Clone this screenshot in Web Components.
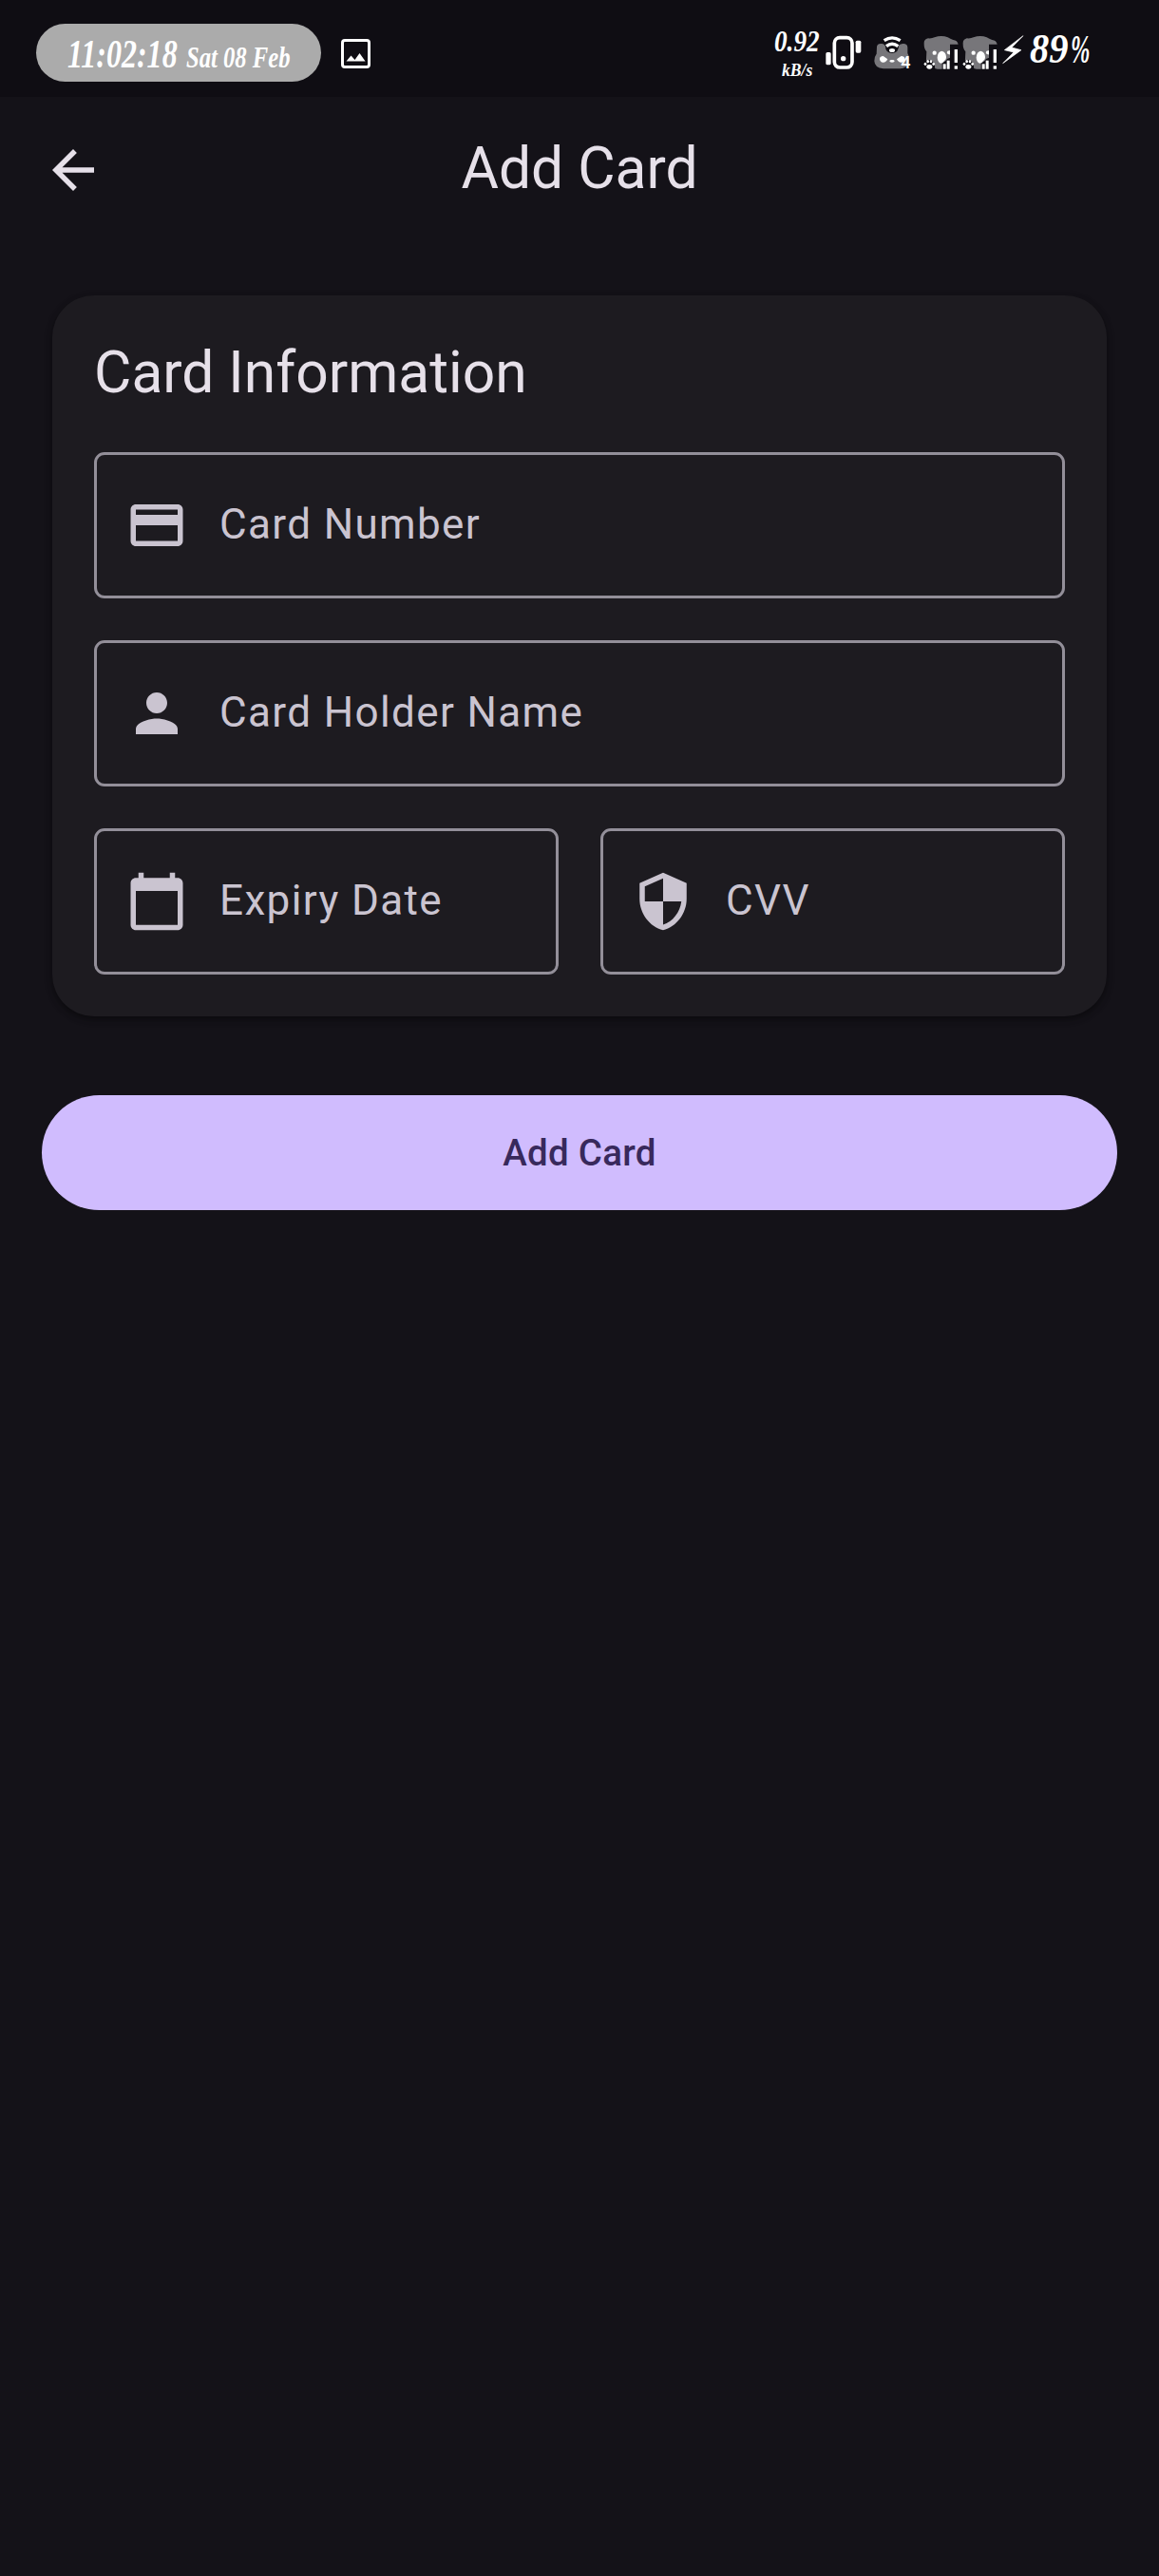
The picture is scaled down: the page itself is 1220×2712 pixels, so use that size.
<!DOCTYPE html>
<html lang="en">
<head>
<meta charset="utf-8">
<title>Add Card</title>
<style>
html,body{margin:0;padding:0;background:#141218}
body{width:1220px;min-height:2712px;font-family:Roboto,sans-serif;color:#e6e0e9}
</style>
</head>
<body>
<add-card-page></add-card-page>
<script>
const define = (name, html) => customElements.define(name, class extends HTMLElement {
  constructor() {
    super();
    this.attachShadow({mode: 'open'}).innerHTML = html;
  }
});

const ICONS = {
  back: 'M20 11H7.83l5.59-5.59L12 4l-8 8 8 8 1.41-1.41L7.83 13H20v-2z',
  card: 'M20 4H4c-1.11 0-1.99.89-1.99 2L2 18c0 1.11.89 2 2 2h16c1.11 0 2-.89 2-2V6c0-1.11-.89-2-2-2zm0 14H4v-6h16v6zm0-10H4V6h16v2z',
  person: 'M12 12c2.21 0 4-1.79 4-4s-1.79-4-4-4-4 1.79-4 4 1.79 4 4 4zm0 2c-2.67 0-8 1.34-8 4v2h16v-2c0-2.66-5.33-4-8-4z',
  calendar: 'M20 3h-1V1h-2v2H7V1H5v2H4c-1.1 0-2 .9-2 2v16c0 1.1.9 2 2 2h16c1.1 0 2-.9 2-2V5c0-1.1-.9-2-2-2zm0 18H4V8h16v13z',
  security: 'M12 1L3 5v6c0 5.55 3.84 10.74 9 12 5.16-1.26 9-6.45 9-12V5l-9-4zm0 10.99h7c-.53 4.12-3.28 7.79-7 8.94V12H5V6.3l7-3.11v8.8z'
};

customElements.define('md-icon', class extends HTMLElement {
  connectedCallback() {
    if (this.shadowRoot) return;
    this.attachShadow({mode: 'open'}).innerHTML = `
      <style>:host{display:block;width:66px;height:66px;flex:none}svg{display:block}</style>
      <svg width="66" height="66" viewBox="0 0 24 24" fill="currentColor"><path d="${ICONS[this.getAttribute('name')]}"/></svg>`;
  }
});

define('signal-koala', `
  <style>:host{display:block;flex:none;width:41px;height:102px}svg{display:block}</style>
  <svg width="41" height="102" viewBox="547 -30 123 306">
    <path fill="#77767a" d="M549 108q-1-14 13-17 12 1 20-3 22-8 42 0 8 5 17 8 13 1 16 14h-26v50h-6l-14 28q-28 2-46-9-11-8-9-24l1-22q-8-8-8-25z"/>
    <path fill="#0f0d13" d="M550 190v-20l8-10 14-1 10 12 2 19zM606 190v-20l12-8 4-6 10-4v38z"/>
    <g fill="#fff">
      <circle cx="582" cy="137" r="6.5"/>
      <path d="M631 130v12q-9 1-10-6 1-7 10-6z"/>
      <path d="M605 131q13 2 14 19l-1 7-10 11-6 2q-10-4-11-18 1-19 14-21z"/>
      <ellipse cx="566" cy="181" rx="9" ry="7"/>
      <ellipse cx="553" cy="172" rx="4" ry="5"/><ellipse cx="561" cy="164" rx="4" ry="5"/>
      <ellipse cx="571" cy="164" rx="4" ry="5"/><ellipse cx="579" cy="172" rx="4" ry="5"/>
      <rect x="609" y="172" width="9" height="16"/><rect x="621" y="161" width="9" height="27"/>
      <rect x="645" y="126" width="10" height="42"/><rect x="645" y="178" width="10" height="10"/>
    </g>
  </svg>`);

define('status-bar', `
  <style>
    :host{display:flex;height:102px;background:#0f0d13;align-items:flex-start;color:#fff}
    svg{display:block;flex:none;overflow:visible}
    text{font-family:"Liberation Serif",serif;font-weight:700;font-style:italic;fill:#fff}
    .pill{margin:25px 0 0 38px;width:300px;height:61px;border-radius:31px;background:#ababab}
    .photo{margin:41px 0 0 21px}
    .right{display:flex;margin-left:auto;padding-right:66px}
    .band{font:500 54px Roboto,sans-serif}
  </style>
  <div class="pill">
    <svg width="300" height="61">
      <text transform="translate(33 46) scale(.745 1)" font-size="43">11:02:18</text>
      <text transform="translate(158 46) scale(.795 1)" font-size="31">Sat 08 Feb</text>
    </svg>
  </div>
  <svg class="photo" width="31" height="31" viewBox="0 0 31 31">
    <rect x="1.500" y="1.500" width="28" height="28" rx="2.500" fill="none" stroke="#fff" stroke-width="3"/>
    <path fill="#fff" d="M5.500 23.500l5-6 4 4.500 5-7 6 8.500z"/>
  </svg>
  <div class="right">
    <svg width="54" height="102">
      <text transform="translate(1 54) scale(.85 1)" font-size="32">0.92</text>
      <text transform="translate(9 80) scale(.93 1)" font-size="19">kB/s</text>
    </svg>
    <svg width="40" height="102" viewBox="236 -30 120 306" fill="#fff">
      <rect x="267" y="89" width="56" height="94" rx="17" fill="none" stroke="#fff" stroke-width="11"/>
      <circle cx="295" cy="155" r="8"/>
      <rect x="240" y="135" width="16" height="40" rx="5"/>
      <rect x="334" y="98" width="17" height="39" rx="5"/>
    </svg>
    <svg width="64.33" height="102" viewBox="356 -30 193 306">
      <path fill="#77767a" d="M401 117q2-11 16-9l20 5h24l22-5q14-1 15 11l0 19q8 15 4 31-6 17-28 18h-52q-28-2-29-24-1-13 7-23z"/>
      <path fill="#0f0d13" d="M417 100q0-18 31-19 32 1 33 19l-11 15q0 22-20 23-22-1-22-22z"/>
      <g fill="none" stroke="#fff" stroke-width="10">
        <path d="M424 98q25-17 51 0"/><path d="M431 116q18-14 37 0"/>
      </g>
      <ellipse cx="449" cy="129" rx="9" ry="6" fill="#fff"/>
      <path fill="#fff" d="M421 147l14 10q-6 12-16 10-9-3-9-12 1-8 11-8zM478 147l-14 10q6 12 16 10 9-3 9-12-1-8-11-8z"/>
      <ellipse cx="449" cy="163" rx="8" ry="4" fill="#fff"/>
      <text class="band" x="477" y="186">4</text>
    </svg>
    <signal-koala></signal-koala>
    <signal-koala></signal-koala>
    <svg width="28" height="102" viewBox="311 -30 84 306">
      <path fill="#fff" stroke="#fff" stroke-width="2" d="M380 83l-59 45 29 7-34 35 58-42-30-8z"/>
    </svg>
    <svg width="72" height="102">
      <text transform="translate(2 66) scale(.92 1)" font-size="44">89</text>
      <text transform="translate(45 66) scale(.57 1)" font-size="43">%</text>
    </svg>
  </div>`);

define('app-bar', `
  <style>
    :host{display:grid;grid-template-columns:66px 1fr 66px;align-items:center;height:154px;padding:0 44px}
    h1{margin:0;padding-bottom:4px;font-size:60.5px;font-weight:400;line-height:77px;text-align:center}
  </style>
  <md-icon name="back"></md-icon><h1><slot></slot></h1>`);

define('info-card', `
  <style>
    :host{display:flex;flex-direction:column;gap:44px;margin:55px 55px 0;padding:43px 44px 44px;border-radius:44px;background:#1d1b20;
      box-shadow:0 3px 6px rgba(0,0,0,.3),0 3px 9px 1px rgba(0,0,0,.15)}
    h2{margin:0;padding-bottom:1px;font-size:60.5px;font-weight:400;line-height:77px}
  </style>
  <h2><slot name="title"></slot></h2><slot></slot>`);

define('field-row', `
  <style>:host{display:flex;gap:44px}::slotted(*){flex:1}</style><slot></slot>`);

define('text-field', `
  <style>
    :host{display:flex;box-sizing:border-box;height:154px;align-items:center;border:3px solid #938f99;border-radius:11px;
      padding:0 30px;gap:33px;color:#cac4d0;font-size:44px;line-height:66px;letter-spacing:1.375px}
    span{padding-bottom:2px}
  </style>
  <slot name="icon"></slot><span><slot></slot></span>`);

define('primary-button', `
  <style>
    :host{display:block;margin:82.5px 44px 0}
    button{display:block;width:100%;height:121px;border:0;border-radius:61px;background:#d0bcfe;color:#38295c;
      font:500 38.5px/55px Roboto,sans-serif;letter-spacing:.275px;padding:0}
  </style>
  <button><slot></slot></button>`);

define('add-card-page', `
  <style>:host{display:block}</style>
  <status-bar></status-bar>
  <app-bar>Add Card</app-bar>
  <info-card>
    <span slot="title">Card Information</span>
    <text-field><md-icon slot="icon" name="card"></md-icon>Card Number</text-field>
    <text-field><md-icon slot="icon" name="person"></md-icon>Card Holder Name</text-field>
    <field-row>
      <text-field><md-icon slot="icon" name="calendar"></md-icon>Expiry Date</text-field>
      <text-field><md-icon slot="icon" name="security"></md-icon>CVV</text-field>
    </field-row>
  </info-card>
  <primary-button>Add Card</primary-button>`);
</script>
</body>
</html>
